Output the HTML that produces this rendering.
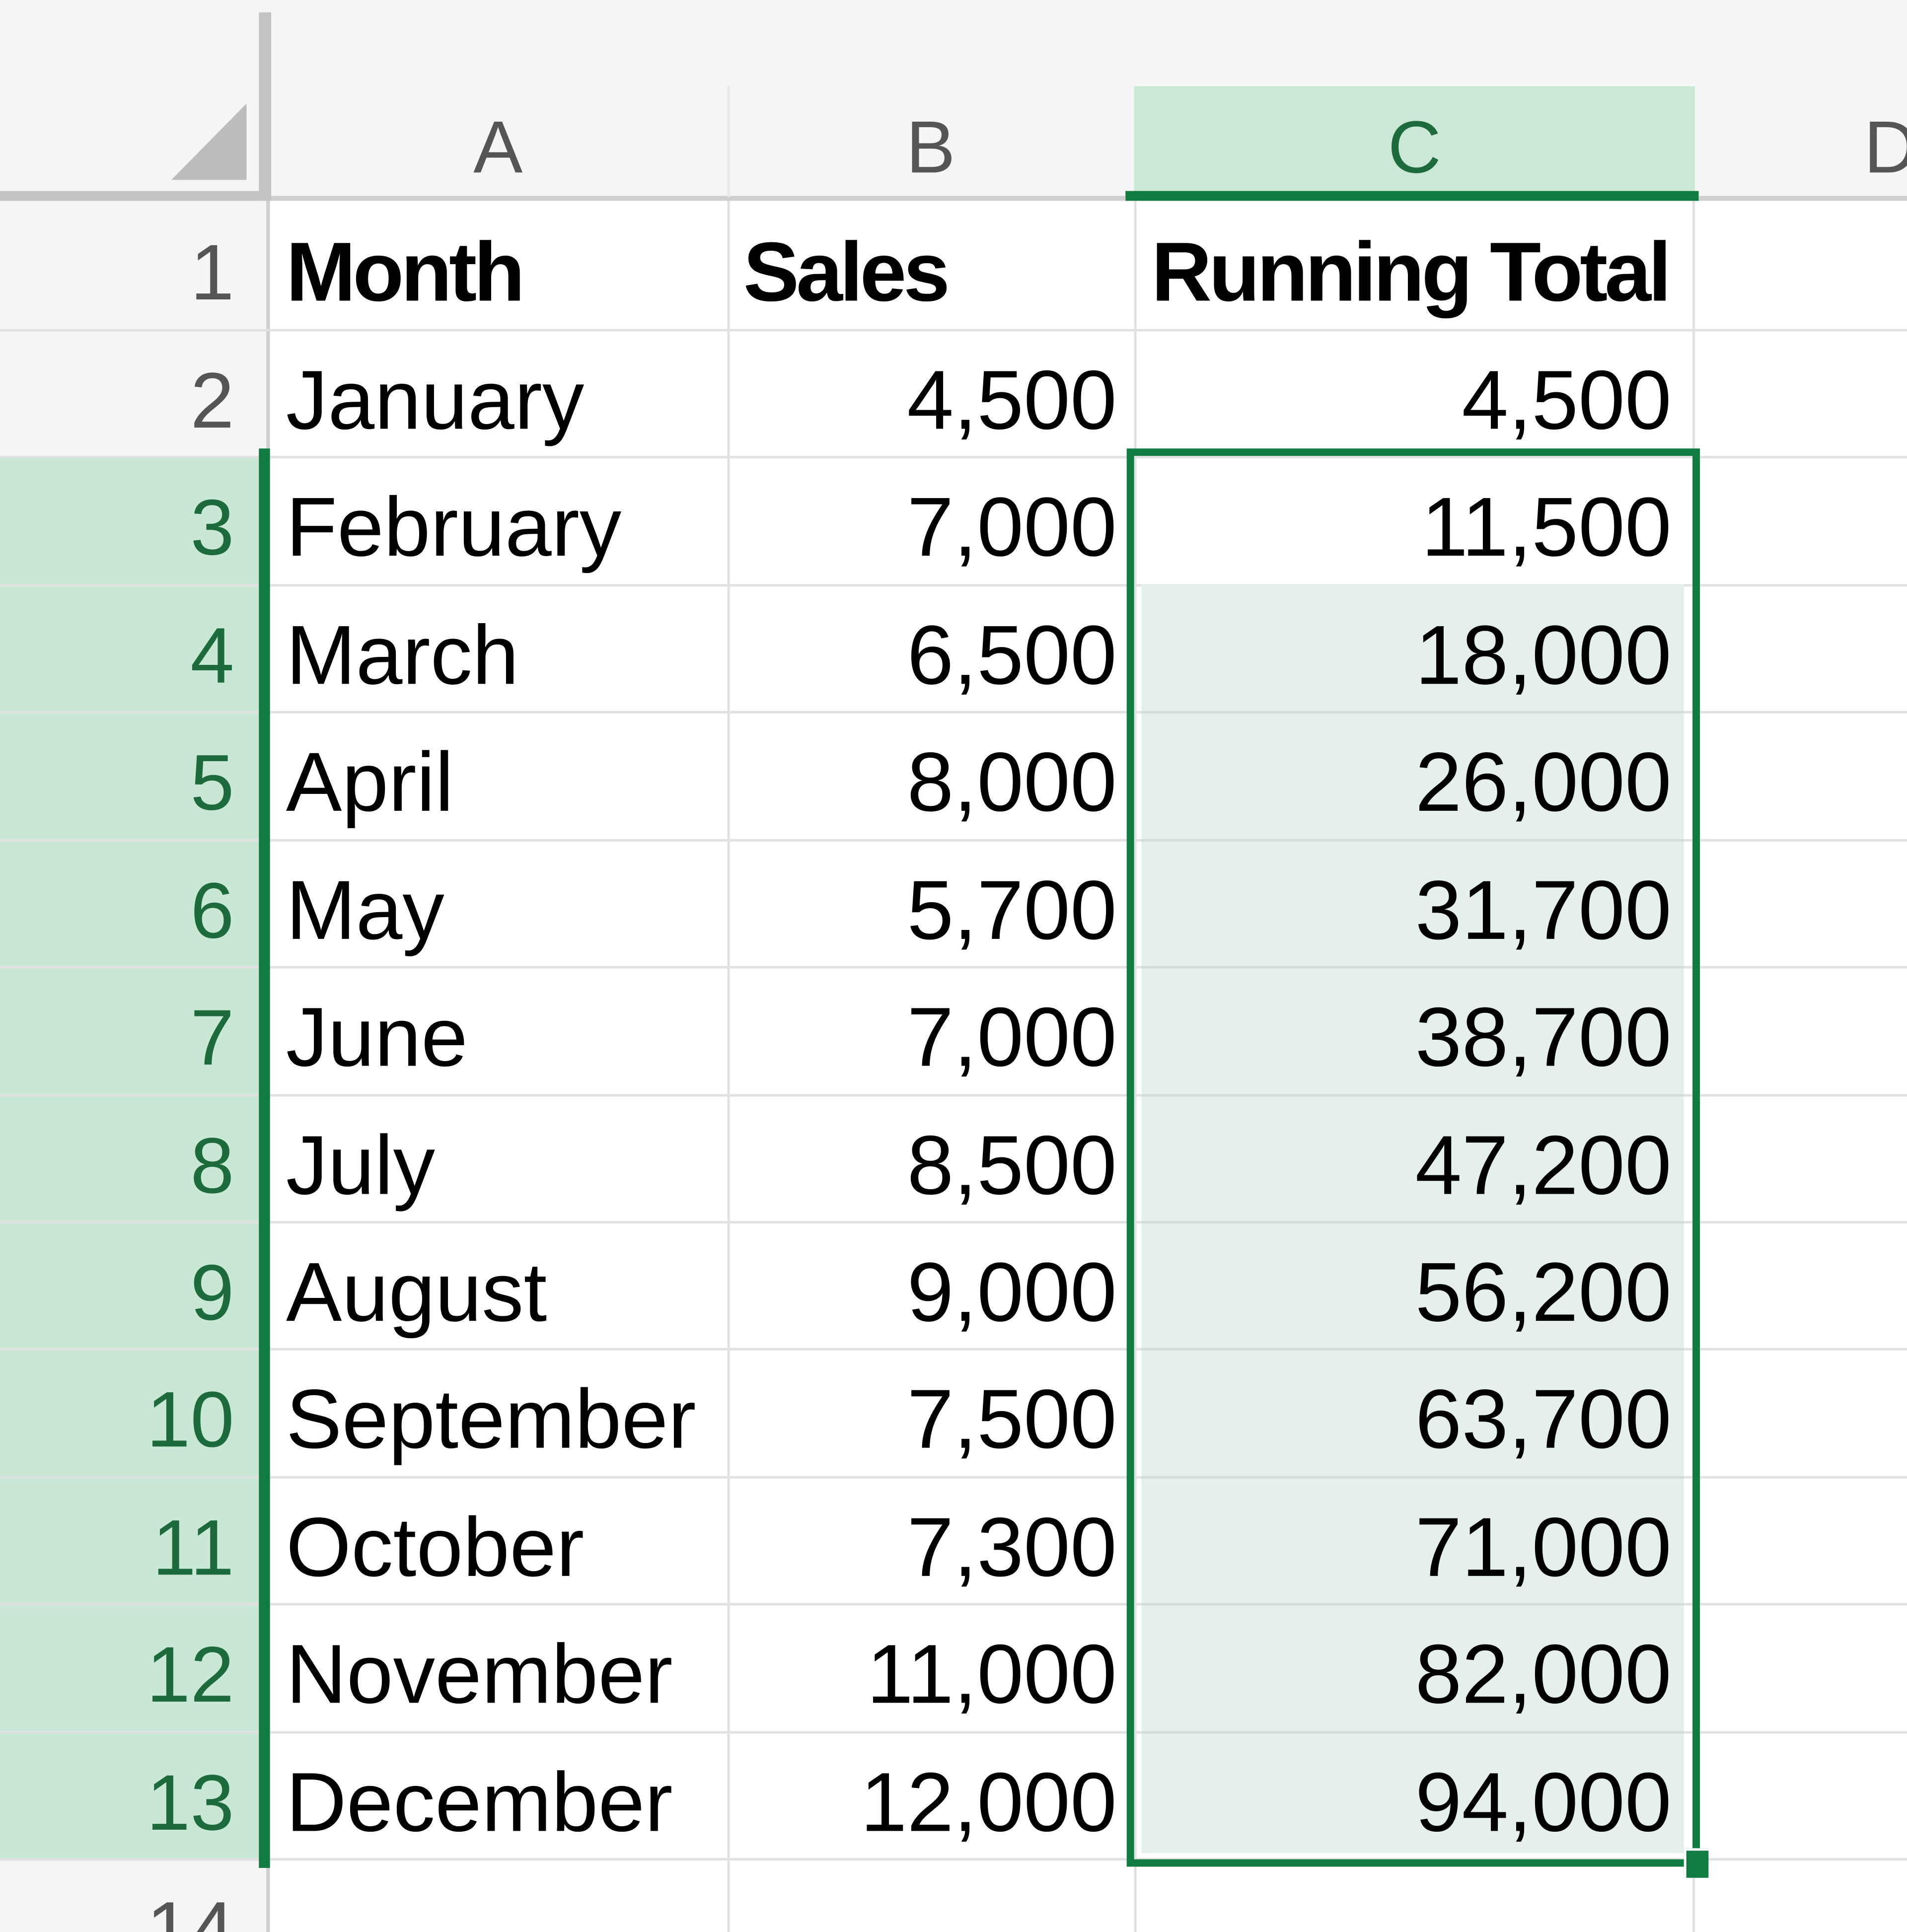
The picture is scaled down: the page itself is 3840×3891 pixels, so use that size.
<!DOCTYPE html>
<html><head><meta charset="utf-8"><style>
html,body{margin:0;padding:0;background:#fff;overflow:hidden}
body{width:3840px;height:3891px;position:relative}
#s{position:absolute;left:0;top:0;width:1548px;height:1568px;transform:scale(2.4822,2.4815);transform-origin:0 0;font-family:"Liberation Sans",sans-serif;background:#fff;overflow:hidden}
.a{position:absolute}
.c{position:absolute;height:103px;line-height:68px;font-size:68px;padding-top:24px;box-sizing:border-box;color:#000;white-space:nowrap}
.rn{position:absolute;left:0;width:190px;text-align:right;font-size:64px;line-height:68px;height:103px;padding-top:24px;box-sizing:border-box;color:#555}
.g{color:#1d6b3d}
.b{font-weight:bold;letter-spacing:-2.5px}
.hl{position:absolute;left:0;width:1548px;height:2px;background:#e1e1e1}
.vl{position:absolute;top:163px;height:1405px;width:2px;background:#e1e1e1}
.ch{position:absolute;top:90px;font-size:60px;line-height:60px;color:#555;text-align:center}
</style></head><body><div id="s">
<div class="a" style="left:0;top:0;width:1548px;height:160px;background:#f5f5f5"></div>
<div class="a" style="left:0;top:160px;width:218px;height:1408px;background:#f5f5f5"></div>
<div class="a" style="left:0;top:371px;width:213px;height:1139px;background:#c9e7d5"></div>
<div class="a" style="left:920px;top:70px;width:455px;height:87px;background:#cbe8d6"></div>
<div class="a" style="left:913px;top:155px;width:465px;height:8px;background:#107c41"></div>
<div class="a" style="left:0;top:155px;width:218px;height:8px;background:#c4c4c4"></div>
<div class="a" style="left:218px;top:159px;width:695px;height:4px;background:#cfcfcf"></div>
<div class="a" style="left:1378px;top:159px;width:170px;height:4px;background:#cfcfcf"></div>
<div class="a" style="left:210px;top:10px;width:10px;height:153px;background:#c4c4c4"></div>
<div class="a" style="left:590px;top:70px;width:2px;height:90px;background:#e6e6e6"></div>
<svg class="a" style="left:138px;top:82px" width="64" height="66"><polygon points="62,2 62,64 1,64" fill="#bcbcbc"/></svg>
<div class="ch" style="left:218px;width:372px">A</div>
<div class="ch" style="left:590px;width:330px">B</div>
<div class="ch" style="left:920px;width:455px;color:#1d6b3d">C</div>
<div class="ch" style="left:1512px;width:40px;text-align:left">D</div>
<div class="a" style="left:216px;top:163px;width:3px;height:1405px;background:#d0d0d0"></div>
<div class="hl" style="top:267px"></div>
<div class="hl" style="top:370px"></div>
<div class="hl" style="top:474px"></div>
<div class="hl" style="top:577px"></div>
<div class="hl" style="top:681px"></div>
<div class="hl" style="top:784px"></div>
<div class="hl" style="top:888px"></div>
<div class="hl" style="top:991px"></div>
<div class="hl" style="top:1094px"></div>
<div class="hl" style="top:1198px"></div>
<div class="hl" style="top:1301px"></div>
<div class="hl" style="top:1405px"></div>
<div class="hl" style="top:1508px"></div>
<div class="vl" style="left:590px"></div>
<div class="vl" style="left:920px"></div>
<div class="vl" style="left:1373px"></div>
<div class="a" style="left:210px;top:364px;width:9px;height:1152px;background:#107c41"></div>
<div class="a" style="left:926px;top:474px;width:440px;height:1030px;background:#e6f0ea"></div>
<div class="hl" style="top:577px;left:926px;width:440px;background:#d3ddd7"></div>
<div class="hl" style="top:681px;left:926px;width:440px;background:#d3ddd7"></div>
<div class="hl" style="top:784px;left:926px;width:440px;background:#d3ddd7"></div>
<div class="hl" style="top:888px;left:926px;width:440px;background:#d3ddd7"></div>
<div class="hl" style="top:991px;left:926px;width:440px;background:#d3ddd7"></div>
<div class="hl" style="top:1094px;left:926px;width:440px;background:#d3ddd7"></div>
<div class="hl" style="top:1198px;left:926px;width:440px;background:#d3ddd7"></div>
<div class="hl" style="top:1301px;left:926px;width:440px;background:#d3ddd7"></div>
<div class="hl" style="top:1405px;left:926px;width:440px;background:#d3ddd7"></div>
<div class="a" style="left:914px;top:364px;width:465px;height:1151px;box-sizing:border-box;border:6px solid #107c41"></div>
<div class="a" style="left:1366px;top:1500px;width:18px;height:22px;background:#107c41;border-left:2px solid #fff;border-top:2px solid #fff"></div>
<div class="rn" style="top:163px">1</div>
<div class="rn" style="top:267px">2</div>
<div class="rn g" style="top:370px">3</div>
<div class="rn g" style="top:474px">4</div>
<div class="rn g" style="top:577px">5</div>
<div class="rn g" style="top:681px">6</div>
<div class="rn g" style="top:784px">7</div>
<div class="rn g" style="top:888px">8</div>
<div class="rn g" style="top:991px">9</div>
<div class="rn g" style="top:1094px">10</div>
<div class="rn g" style="top:1198px">11</div>
<div class="rn g" style="top:1301px">12</div>
<div class="rn g" style="top:1405px">13</div>
<div class="rn" style="top:1508px">14</div>
<div class="c b" style="left:232px;top:163px">Month</div>
<div class="c b" style="left:603px;top:163px">Sales</div>
<div class="c b" style="left:934px;top:163px">Running Total</div>
<div class="c" style="left:232px;top:267px">January</div>
<div class="c" style="left:232px;top:370px">February</div>
<div class="c" style="left:232px;top:474px">March</div>
<div class="c" style="left:232px;top:577px">April</div>
<div class="c" style="left:232px;top:681px">May</div>
<div class="c" style="left:232px;top:784px">June</div>
<div class="c" style="left:232px;top:888px">July</div>
<div class="c" style="left:232px;top:991px">August</div>
<div class="c" style="left:232px;top:1094px">September</div>
<div class="c" style="left:232px;top:1198px">October</div>
<div class="c" style="left:232px;top:1301px">November</div>
<div class="c" style="left:232px;top:1405px">December</div>
<div class="c" style="left:590px;width:316px;text-align:right;top:267px">4,500</div>
<div class="c" style="left:590px;width:316px;text-align:right;top:370px">7,000</div>
<div class="c" style="left:590px;width:316px;text-align:right;top:474px">6,500</div>
<div class="c" style="left:590px;width:316px;text-align:right;top:577px">8,000</div>
<div class="c" style="left:590px;width:316px;text-align:right;top:681px">5,700</div>
<div class="c" style="left:590px;width:316px;text-align:right;top:784px">7,000</div>
<div class="c" style="left:590px;width:316px;text-align:right;top:888px">8,500</div>
<div class="c" style="left:590px;width:316px;text-align:right;top:991px">9,000</div>
<div class="c" style="left:590px;width:316px;text-align:right;top:1094px">7,500</div>
<div class="c" style="left:590px;width:316px;text-align:right;top:1198px">7,300</div>
<div class="c" style="left:590px;width:316px;text-align:right;top:1301px">11,000</div>
<div class="c" style="left:590px;width:316px;text-align:right;top:1405px">12,000</div>
<div class="c" style="left:920px;width:436px;text-align:right;top:267px">4,500</div>
<div class="c" style="left:920px;width:436px;text-align:right;top:370px">11,500</div>
<div class="c" style="left:920px;width:436px;text-align:right;top:474px">18,000</div>
<div class="c" style="left:920px;width:436px;text-align:right;top:577px">26,000</div>
<div class="c" style="left:920px;width:436px;text-align:right;top:681px">31,700</div>
<div class="c" style="left:920px;width:436px;text-align:right;top:784px">38,700</div>
<div class="c" style="left:920px;width:436px;text-align:right;top:888px">47,200</div>
<div class="c" style="left:920px;width:436px;text-align:right;top:991px">56,200</div>
<div class="c" style="left:920px;width:436px;text-align:right;top:1094px">63,700</div>
<div class="c" style="left:920px;width:436px;text-align:right;top:1198px">71,000</div>
<div class="c" style="left:920px;width:436px;text-align:right;top:1301px">82,000</div>
<div class="c" style="left:920px;width:436px;text-align:right;top:1405px">94,000</div>
</div></body></html>
